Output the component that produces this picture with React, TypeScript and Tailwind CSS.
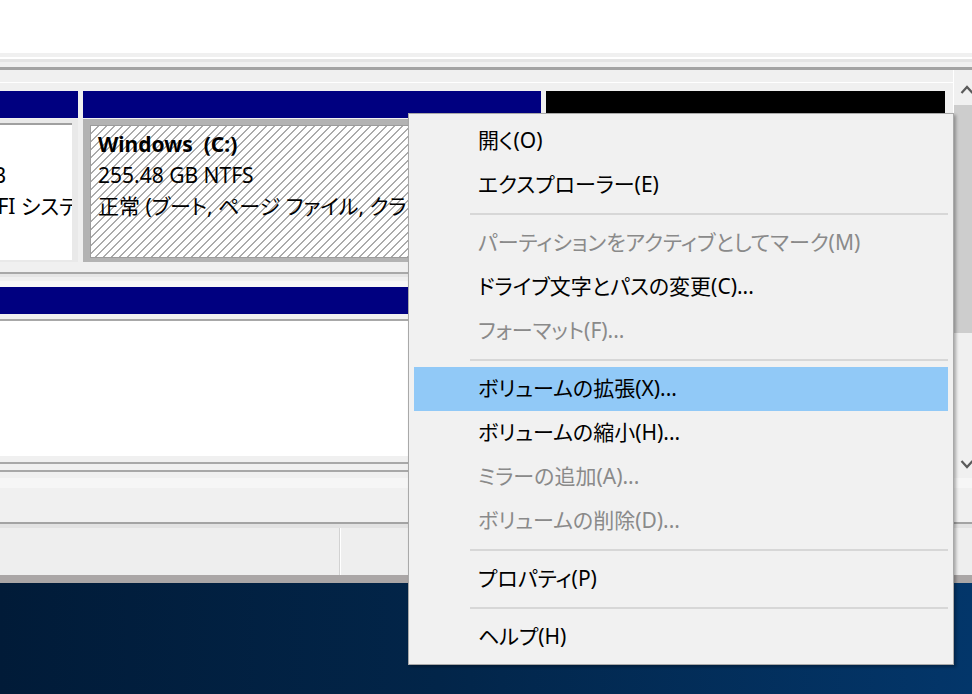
import React from 'react';

type Item = { label?: string; sep?: boolean; disabled?: boolean; active?: boolean };

const menuItems: Item[] = [
  { label: '開く(O)' },
  { label: 'エクスプローラー(E)' },
  { sep: true },
  { label: 'パーティションをアクティブとしてマーク(M)', disabled: true },
  { label: 'ドライブ文字とパスの変更(C)...' },
  { label: 'フォーマット(F)...', disabled: true },
  { sep: true },
  { label: 'ボリュームの拡張(X)...', active: true },
  { label: 'ボリュームの縮小(H)...' },
  { label: 'ミラーの追加(A)...', disabled: true },
  { label: 'ボリュームの削除(D)...', disabled: true },
  { sep: true },
  { label: 'プロパティ(P)' },
  { sep: true },
  { label: 'ヘルプ(H)' },
];

function Chevron({ up }: { up?: boolean }) {
  return (
    <svg width="14" height="9" viewBox="0 0 14 9">
      <polyline
        points={up ? '1.5,8 7,2 12.5,8' : '1.5,1 7,7 12.5,1'}
        fill="none"
        stroke="#5a5a5a"
        strokeWidth="2.2"
      />
    </svg>
  );
}

function ContextMenu() {
  return (
    <div className="absolute left-[408px] top-[113px] w-[546px] border border-[#a9a9a9] bg-[#f1f1f1] px-[5px] py-[5px] shadow-[2px_2px_3px_rgba(0,0,0,0.3)]">
      {menuItems.map((it, i) =>
        it.sep ? (
          <div key={i} className="flex h-[14px] items-center pl-[56px]">
            <div className="h-[2px] w-full bg-[#d7d7d7]" />
          </div>
        ) : (
          <div
            key={i}
            className={`flex h-[44px] items-center whitespace-nowrap pl-[64px] ${
              it.active ? 'bg-[#91c9f7]' : ''
            } ${it.disabled ? 'text-[#8a8a8a]' : 'text-black'}`}
          >
            {it.label}
          </div>
        )
      )}
    </div>
  );
}

function DiskRow() {
  return (
    <div className="-ml-[62px] flex h-[171px] shrink-0 gap-[5px] pr-[8px]">
      {/* EFI partition, mostly scrolled off to the left */}
      <div className="flex w-[140px] shrink-0 flex-col">
        <div className="h-[27px] bg-[#000080]" />
        <div className="mt-[1px] flex h-[143px] flex-col bg-[#e9e9e9] pb-[2px] pr-[6px] pt-[4px]">
          <div className="flex-1 overflow-hidden whitespace-nowrap border-t-2 border-[#a0a0a0] bg-white pt-[4px] leading-[31px]">
            <div className="-ml-[6px]">
              <div>&nbsp;</div>
              <div>100 MB</div>
              <div>正常 (EFI システム パーティション)</div>
            </div>
          </div>
        </div>
      </div>
      {/* Windows (C:), selected */}
      <div className="flex w-[458px] shrink-0 flex-col">
        <div className="h-[27px] bg-[#000080]" />
        <div className="mt-[1px] flex h-[143px] flex-col bg-[#b3b3b3] pb-[4px] pl-[7px] pr-[7px] pt-[6px]">
          <div className="flex-1 overflow-hidden whitespace-nowrap border border-[#9c9c9c] bg-[image:repeating-linear-gradient(135deg,#ffffff_0px,#ffffff_4.6px,#ababab_4.6px,#ababab_5.66px)] pl-[7px] pt-[3px] leading-[31px]">
            <div className="font-bold">Windows&nbsp;&nbsp;(C:)</div>
            <div>255.48 GB NTFS</div>
            <div>正常 (ブート, ページ ファイル, クラッシュ ダンプ, プライマリ パーティション)</div>
          </div>
        </div>
      </div>
      {/* Unallocated */}
      <div className="flex w-[399px] shrink-0 flex-col">
        <div className="h-[27px] bg-black" />
        <div className="mt-[1px] flex h-[143px] flex-col bg-[#e9e9e9] p-[4px]">
          <div className="flex-1 border-t-2 border-[#a0a0a0] bg-white" />
        </div>
      </div>
    </div>
  );
}

export default function App() {
  return (
    <div className="relative flex h-[694px] w-[972px] flex-col overflow-hidden bg-white font-['Noto_Sans','Noto_Sans_CJK_JP',sans-serif] text-[21px] text-black [font-feature-settings:'palt']">
      {/* upper volume list (empty part) */}
      <div className="h-[53px] shrink-0 bg-white" />

      {/* splitter */}
      <div className="h-[4px] shrink-0 bg-[#f0f0f0]" />
      <div className="h-[2px] shrink-0 bg-white" />
      <div className="h-[3px] shrink-0 bg-[#e4e4e4]" />
      <div className="h-[5px] shrink-0 bg-[#f0f0f0]" />
      <div className="h-[3px] shrink-0 bg-[#a3a3a3]" />

      {/* graphical disk view, wider than the cropped screenshot */}
      <div className="flex h-[408px] w-[980px] shrink-0">
        <div className="flex w-[954px] shrink-0 flex-col overflow-hidden border-r border-white bg-[#f0f0f0]">
          <div className="h-[12px] shrink-0" />
          <div className="h-[1px] shrink-0 bg-white" />
          <div className="h-[8px] shrink-0" />
          <DiskRow />
          <div className="h-[10px] shrink-0" />
          <div className="h-[2px] shrink-0 bg-[#a8a8a8]" />
          <div className="h-[3px] shrink-0 bg-[#e6e6e6]" />
          <div className="h-[4px] shrink-0 bg-[#f0f0f0]" />
          <div className="h-[6px] shrink-0 bg-[#f7f7f7]" />
          {/* second disk */}
          <div className="h-[27px] shrink-0 bg-[#000080]" />
          <div className="h-[5px] shrink-0" />
          <div className="h-[2px] shrink-0 bg-[#a8a8a8]" />
          <div className="h-[135px] shrink-0 bg-white" />
          <div className="h-[6px] shrink-0" />
          <div className="h-[2px] shrink-0 bg-[#a8a8a8]" />
          <div className="h-[6px] shrink-0" />
          <div className="h-[2px] shrink-0 bg-[#a8a8a8]" />
          <div className="flex-1" />
        </div>
        {/* vertical scrollbar */}
        <div className="flex w-[26px] shrink-0 flex-col bg-[#f0f0f0]">
          <div className="flex h-[35px] items-center justify-center pt-[4px]">
            <Chevron up />
          </div>
          <div className="h-[228px] bg-[#cdcdcd]" />
          <div className="flex-1" />
          <div className="flex h-[24px] items-center justify-center pb-[4px]">
            <Chevron />
          </div>
        </div>
      </div>

      {/* lower area and status bar */}
      <div className="h-[10px] shrink-0 bg-[#f6f6f6]" />
      <div className="h-[34px] shrink-0 bg-[#f0f0f0]" />
      <div className="h-[2px] shrink-0 bg-[#a3a3a3]" />
      <div className="h-[4px] shrink-0 bg-[#e2e2e2]" />
      <div className="flex h-[47px] shrink-0 bg-[#eeeeee]">
        <div className="w-[340px] border-r border-[#d2d2d2]" />
        <div className="w-[1px] bg-white" />
        <div className="flex-1" />
      </div>
      <div className="h-[8px] shrink-0 bg-[#aaa6a6]" />

      {/* desktop */}
      <div className="flex-1 bg-[linear-gradient(to_right,#011b38,#022549_45%,#03366a)]" />

      <ContextMenu />
    </div>
  );
}
